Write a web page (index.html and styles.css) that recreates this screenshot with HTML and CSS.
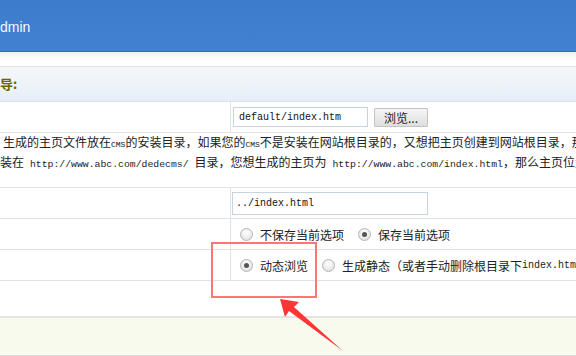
FILE: index.html
```html
<!DOCTYPE html>
<html lang="zh-CN">
<head>
    <meta charset="UTF-8">
    <title>更新主页HTML</title>
    <link rel="stylesheet" href="styles.css">
</head>
<body>
    <div class="top-bar">
        <span class="user-name">dmin</span>
    </div>
    <div class="sub-bar"></div>
    <div class="section-title">导:</div>

    <div class="form-rows">
        <div class="row row-30">
            <div class="cell-label"></div>
            <div class="cell-field">
                <input type="text" class="txt txt-short" value="default/index.htm">
                <button class="btn">浏览...</button>
            </div>
        </div>
        <div class="row row-desc">
            <div class="desc-text">
                <div class="desc-line first">生成的主页文件放在<span class="en small">CMS</span>的安装目录，如果您的<span class="en small">CMS</span>不是安装在网站根目录的，又想把主页创建到网站根目录，那么请用相对路径</div>
                <div class="desc-line">装在<span class="en url"> http://www.abc.com/dedecms/ </span>目录，您想生成的主页为<span class="en url"> http://www.abc.com/index.html</span>，那么主页位置应该用</div>
            </div>
        </div>
        <div class="row row-30">
            <div class="cell-label"></div>
            <div class="cell-field">
                <input type="text" class="txt txt-long" value="../index.html">
            </div>
        </div>
        <div class="row row-31">
            <div class="cell-label"></div>
            <div class="cell-field">
                <label class="opt"><input type="radio" name="saveset" class="radio">不保存当前选项</label>
                <label class="opt"><input type="radio" name="saveset" class="radio" checked>保存当前选项</label>
            </div>
        </div>
        <div class="row row-31">
            <div class="cell-label"></div>
            <div class="cell-field">
                <label class="opt"><input type="radio" name="showmod" class="radio" checked>动态浏览</label>
                <label class="opt"><input type="radio" name="showmod" class="radio">生成静态（或者手动删除根目录下<span class="en">index.html</span>）</label>
            </div>
        </div>
        <div class="row row-blank"></div>
    </div>

    <div class="footer"></div>

    <!-- 标注 -->
    <div class="mark-box"></div>
    <svg class="mark-arrow" width="72" height="60" viewBox="0 0 72 60">
        <polygon points="4,4 23,7 18,12 67,56 13,16 9,22" fill="#ff3434"/>
    </svg>
</body>
</html>
```

FILE: styles.css
```css
body {
    margin: 0;
    width: 576px;
    height: 356px;
    overflow: hidden;
    position: relative;
    font-family: "Noto Sans CJK SC", sans-serif;
    font-size: 12px;
    color: #222;
    background-color: #fff;
}

.top-bar {
    height: 51px;
    background: linear-gradient(#3d7bcc, #4281d2);
    border-bottom: 1px solid #3769b0;
    display: flex;
    align-items: center;
}

.user-name {
    font-family: "Liberation Sans", sans-serif;
    font-size: 14px;
    color: #f4f8ff;
    margin-top: 2px;
}

.sub-bar {
    height: 14px;
    background: linear-gradient(#eef1f4, #fff 60%);
    border-bottom: 1px solid #e2e2e2;
}

.section-title {
    height: 34px;
    line-height: 34px;
    background: linear-gradient(#f5f8fb, #e6eef7);
    border-bottom: 1px solid #dbe2ea;
    color: #666600;
    font-weight: bold;
    font-size: 13px;
}

.row {
    display: grid;
    grid-template-columns: 231px 1fr;
    border-bottom: 1px solid #e2e2e2;
}

.row-30 {
    height: 30px;
}

.row-31 {
    height: 30px;
}

.row-desc {
    display: block;
    height: 54px;
}

.row-blank {
    height: 35px;
    border-bottom: none;
}

.cell-label {
    border-right: 1px solid #e2e2e2;
}

.cell-field {
    display: flex;
    align-items: center;
    padding-left: 2px;
    white-space: nowrap;
}

.desc-text {
    white-space: nowrap;
    line-height: 17px;
}

.desc-line.first {
    text-indent: 3px;
}

.en {
    font-family: "Liberation Mono", monospace;
    font-size: 10px;
}

.en.small {
    font-size: 8px;
}

.en.url {
    font-size: 9.8px;
}

.txt {
    box-sizing: border-box;
    border: 1px solid #c5d4e3;
    font-family: "Liberation Mono", monospace;
    font-size: 10px;
    color: #111;
    padding: 0 0 0 5px;
    margin: 0;
    outline: none;
}

.txt-short {
    width: 135px;
    height: 20px;
}

.txt-long {
    width: 196px;
    height: 23px;
    padding-left: 3px;
    margin-left: -1px;
}

.btn {
    width: 54px;
    height: 19px;
    margin-left: 6px;
    padding: 0;
    font-family: "Noto Sans CJK SC", sans-serif;
    font-size: 12px;
    line-height: 17px;
    color: #222;
    background: linear-gradient(#f6f6f6, #dedede);
    border: 1px solid #c3c3c3;
    border-radius: 1px;
}

.opt {
    display: flex;
    align-items: center;
    margin-right: 7px;
}

.radio {
    appearance: none;
    -webkit-appearance: none;
    box-sizing: border-box;
    width: 13px;
    height: 13px;
    margin: 0 7px 0 7px;
    border: 1px solid #b4b4b4;
    border-radius: 50%;
    background: radial-gradient(circle at 50% 35%, #fff, #dcdcdc);
    position: relative;
}

.radio:checked::after {
    content: "";
    position: absolute;
    left: 3px;
    top: 3px;
    width: 5px;
    height: 5px;
    border-radius: 50%;
    background-color: #555;
}

.footer {
    height: 37px;
    background-color: #f8faee;
    border-top: 2px solid #e4e4e4;
    border-bottom: 1px solid #dcdcdc;
}

.mark-box {
    position: absolute;
    left: 211px;
    top: 242px;
    width: 102px;
    height: 52px;
    border: 2px solid #ff7474;
}

.mark-arrow {
    position: absolute;
    left: 276px;
    top: 295px;
}
```
